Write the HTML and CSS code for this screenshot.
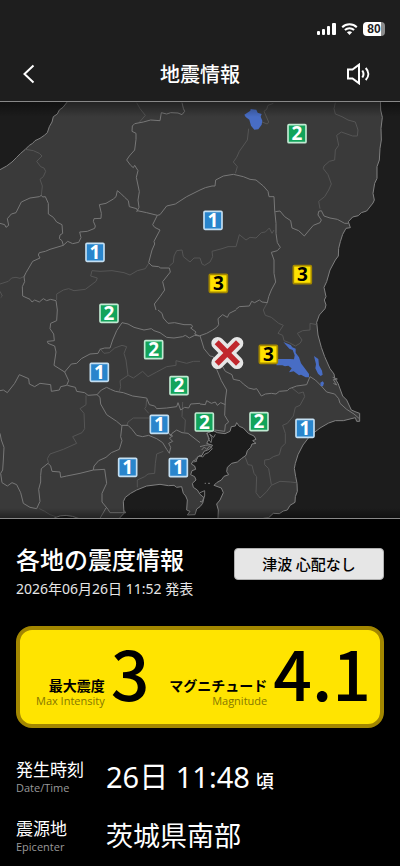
FILE: index.html
```html
<!DOCTYPE html>
<html lang="ja">
<head>
<meta charset="utf-8">
<meta name="viewport" content="width=device-width, initial-scale=1">
<title>地震情報</title>
<link rel="stylesheet" href="styles.css">
</head>
<body>
<header class="top">
  <div class="status">
    <svg class="signal" viewBox="0 0 19 12" aria-hidden="true"><rect x="0" y="8" width="3" height="4" rx="1"/><rect x="5" y="6" width="3" height="6" rx="1"/><rect x="10" y="3" width="3" height="9" rx="1"/><rect x="15" y="0" width="4" height="12" rx="1"/></svg>
    <svg class="wifi" viewBox="0 0 17 12" aria-hidden="true"><path d="M1.200 4.200C5.200 .2 11.800 .2 15.800 4.200M3.900 7C6.500 4.600 10.500 4.600 13.100 7"/><path class="dot" d="M8.500 11.900L5.900 9.300C7.300 7.900 9.700 7.900 11.100 9.300Z"/></svg>
    <span class="battery">80</span>
  </div>
  <div class="bar">
    <button class="icon-button" type="button" aria-label="戻る"><svg class="back" viewBox="0 0 12 20"><path d="M10.500 1.500L1.500 10L10.500 18.500"/></svg></button>
    <h1>地震情報</h1>
    <button class="icon-button" type="button" aria-label="音声"><svg class="sound" viewBox="0 0 24 22"><path d="M2 6.500H6.500L13 1.700V20.300L6.500 15.500H2Z"/><path d="M16.300 7.500C17.700 9.500 17.700 12.500 16.300 14.500M19.700 5C23.200 8.700 23.200 13.300 19.700 17"/></svg></button>
  </div>
</header>

<main>
<svg class="map" viewBox="0 306 1200 1248" role="img" aria-label="各地の震度">
  <defs>
    <linearGradient id="shade" x1="0" y1="0" x2="0" y2="1"><stop offset="0" stop-color="#000" stop-opacity=".4"/><stop offset="1" stop-color="#000" stop-opacity="0"/></linearGradient>
    <linearGradient id="shade-low" x1="0" y1="1" x2="0" y2="0"><stop offset="0" stop-color="#000" stop-opacity=".4"/><stop offset="1" stop-color="#000" stop-opacity="0"/></linearGradient>
    <rect id="tile" x="-27" y="-27" width="54" height="54" rx="3"/>
  </defs>
  <rect class="sea" y="300" width="1200" height="1260"/>

  <path class="land" d="M204 290L200 308L189 322L178 330L172 342L160 350L156 366L148 380L142 398L133 406L120 415L105 422L98 430L88 436L76 448L62 460L50 472L36 486L20 498L-9 514V1600H180L120 1580L165 1553Q195 1538 238 1556L260 1600H350L355 1558L372 1540L370 1505L376 1492L392 1480L410 1470L440 1458L480 1453L505 1457L522 1456L530 1462L545 1460L550 1480L557 1488L562 1500L560 1530L570 1534L562 1545L585 1544L590 1527L600 1520L608 1510L612 1493L600 1483L592 1470L580 1462L577 1450L588 1440L584 1430L572 1424L576 1412L587 1408L584 1398L574 1392L580 1382L590 1379L594 1370L606 1366L612 1354L628 1348L638 1336L620 1330L628 1316L620 1300L640 1292L652 1298L675 1301L690 1294L694 1280L706 1278L710 1268L718 1279L730 1284L745 1300L762 1308L768 1318L758 1322L768 1330L756 1332L752 1342L742 1352L738 1366L724 1376L712 1386L695 1390L682 1402L680 1415L686 1424L672 1429L664 1440L650 1448L642 1456L664 1464L670 1478L660 1500L650 1512L655 1530L652 1600H780L790 1555L806 1553L820 1540L838 1541L850 1533L862 1530L870 1516L885 1507L886 1490L892 1474L891 1450L887 1430L883 1405L886 1390L894 1364L909 1335L925 1314L942 1298L960 1284L986 1269L1006 1262L1030 1262L1066 1253L1070 1264L1079 1264L1079 1240L1068 1236L1054 1230L1040 1200L1028 1188L1014 1150L1004 1134L1002 1122L990 1106L974 1070L964 1042L954 1005L950 967L958 945L975 926L978 915L973 900L978 890L972 862L980 845L990 810L1006 780L1015 768L1016 745L1021 725L1028 703L1038 685L1051 683L1045 665L1058 651L1075 647L1084 638L1100 633L1119 609L1123 600L1119 580L1124 550L1131 535L1131 500L1138 480L1140 445L1144 420L1143 385L1147 352L1142 330L1141 290Z"/>
  <path class="coast" d="M605 1350l8-9 7 7 9-10 8 8-12 12-10 4-7 9-11-4-9 9 2 8-10 2M622 1298l4 20 7 10 3-14-7-12 12 10 5-9M624 1450h6M618 1450h-4M1000 1150l10 5-10-16 12-2-14-5M600 1478l14-6v16l-8 18-6-2"/>

  <g transform="translate(0 300)">
    <path class="minor" d="M410 8L420 26 436 46 417 68M76 148L100 152 118 160 126 168 110 184 122 200 132 204 137 214 130 230 120 238 127 258 124 286M0 552L25 544 35 534 48 532 60 535 76 528M0 574L7 588 2 593M170 600L170 582 190 570 206 566 222 572 256 568 288 544 292 534 272 528 276 512 300 514 336 512 372 518 390 525 412 512 436 506 446 490M508 498L520 488 522 468 530 452 546 450 550 470 570 486 582 474 600 474"/>
    <path class="border" d="M546 8L550 25 554 34 546 44 534 39 512 38 500 42 484 38 480 62 452 60 430 66 404 71 397 78 396 94 408 100 408 118 404 150 388 168 380 180 392 196 400 203 404 196 414 212 409 232 418 275 414 300 417 322 410 336"/>
    <path class="border" d="M0 370L14 374 18 382 26 376 22 356 34 342 48 338 64 306 90 294 118 290 124 286 128 291 136 290 145 310 145 342 160 352 170 366 186 374 188 400 180 405 178 416 186 422 190 436 203 424 218 431 236 427 243 413 239 396 262 394 284 385 286 378 280 364 282 356 303 355 304 340 298 314 318 310 340 297 348 290 352 272 362 280 374 292 385 302 388 320 410 326 412 332 440 338 472 346"/>
    <path class="border" d="M190 436L150 448 136 454 118 458 115 465 120 474 98 484 78 518 72 530 74 545 67 560 68 588 90 598 96 606 104 600 118 606 130 596 140 602 152 598 168 602 172 630M472 346L458 374 464 382 480 390 462 424 464 432 456 450 446 488 456 498 476 500 482 504 508 504 511 516 488 545 494 570 480 590 463 612 468 630M472 346L480 344 500 318 526 312 560 290 600 270"/>
  </g>
  <g transform="translate(600 300)">
    <path class="minor" d="M220 10L204 16 200 28 192 34 206 66 202 72 186 66M146 86L142 120 118 154 110 172 100 186 112 200 106 220M406 8L402 26 406 42 426 50 444 60 466 66 474 90 472 108 458 108 424 96 410 106 416 136 406 150 404 180 388 184 372 198 370 206 384 224 394 252 386 270 374 290 356 304 360 326M0 474L6 492 14 496 30 486 38 470 36 454 66 446 84 440 108 440 118 404 138 420 150 412 168 414 184 398 196 396 208 384 216 400 222 390M190 630L202 608"/>
    <path class="border" d="M0 270L16 263 36 258 45 258 47 240 70 228 100 223 130 230 150 238 168 240 190 258 204 274 207 290 222 290 224 330 228 370 228 400 232 428 241 442 232 452 214 457 222 480 222 520 227 546 214 570 206 590 202 608 186 606 178 600 164 608 155 604 148 618 118 620 108 628M226 335L240 333 254 350 272 362 276 384 296 392 313 408 328 390 340 376 360 368 364 360 354 345 356 334 364 332 372 348 390 354 412 358 434 370 445 370"/>
  </g>
  <g transform="translate(0 930)">
    <path class="minor" d="M300 116L312 130 328 128 344 114 366 106 380 110 372 130 378 150 384 196 360 212 362 230 358 244M385 196L400 204 428 184 444 200 470 186 500 170 528 166 528 152 560 160 580 154 600 154M258 256L258 284 240 296 252 310 254 356 246 368 218 380 230 400 190 418 150 432 142 446 146 460M380 348L384 336 400 324 448 324M440 268L438 290 434 296 446 310M548 276L546 320 556 330 554 366M490 424L470 432 466 460 464 490 444 492 434 500 412 510 412 532M118 596L134 604 150 614 168 620"/>
    <path class="border" d="M172 0L170 32 152 40 150 56 161 72 163 92 142 94 144 100 164 108 168 126 162 166 194 186 214 162 230 160 244 146 270 132 294 130 300 118 314 114 330 114 338 90 350 62 366 38 384 42 402 52 432 60 454 56 462 62 480 68 500 82 522 84 548 80 556 76 568 84 584 76 600 78M474 0L486 10 490 24 504 40 524 38 552 44 574 44 578 50 572 54 588 66 584 72 598 78"/>
    <path class="border" d="M194 186L206 212 200 226 182 230 178 240 154 244 152 224 120 220 104 230 88 222 86 206 58 194 44 220 22 248 10 240 0 242M202 226L226 232 230 244 254 248 264 256 291 254 304 240 320 232 332 238 346 244 370 248 398 258 440 264 448 284 464 288 470 296 500 294 530 290 534 278 542 300 554 292 566 294 572 282 600 280"/>
    <path class="border" d="M291 254L300 262 302 282 320 314 350 334 364 346 384 346 396 358 410 376 428 380 446 376 470 386 488 398 500 418 508 430 512 412 506 400 518 394 508 384 518 378 506 370M504 366L512 378 516 370 530 360 546 368 564 370 582 384 600 398"/>
    <path class="border" d="M366 346L362 380 366 392 358 418 334 428 318 442 296 452 282 468 280 480 240 490 200 498 182 502 180 486 156 484 152 468 144 460 124 476 122 496 122 516 116 538 120 574 110 596 90 592 70 580 62 548 50 524 36 518 22 528 6 518 2 490 8 480 10 450 12 412 4 390 0 370M280 480L314 478 320 520 306 550 306 576 324 598 330 608 360 608 378 608 370 600M318 594L300 625"/>
  </g>
  <g transform="translate(600 930)">
    <path class="minor" d="M190 0L196 16 214 22 236 40 250 46 234 70 248 76 252 92 268 98 286 108 300 100 306 90 292 70 308 62 330 60 330 40 350 44M276 234L296 250 310 246 314 260 300 286 286 292 280 318 262 340 248 346 256 370 256 400 244 412 238 434 220 440 208 448 194 450 194 464 206 476 214 524M136 442L144 464 156 466 162 490 170 500 168 548 180 564 200 545 214 526 240 514 272 516 288 518"/>
    <path class="border" d="M0 77L20 70 38 60 50 52 56 44 54 26 68 14 82 22 88 10 108 0M68 170L76 184 96 194 100 208 120 212 130 222 146 234 162 238 170 236 184 258 196 252 214 250 228 252 238 244 262 242 268 236 290 228 320 224 330 200 346 210 364 228 380 246 404 252 416 266 420 280 440 298 462 312 478 326"/>
    <path class="border" d="M0 77L12 116 30 138 40 140 46 168 64 212 80 240 76 270 74 316 86 336 76 344 74 364 44 360M0 282L16 284 20 272 34 280 46 276 52 286 62 278 76 284M0 410L16 406 30 404"/>
  </g>

  <path class="lake" d="M733 344l18-12 1-5 17 2 4 9 12 4-3 8 5 12-2 12-10 14-12 1-10-12-5-18-11-8zM832 1077h26l12 0 12 1 2-12-6-16-10-4-18-20 22 9 5 7 10 4 0 12 10 14 6 18 24 32 0 10-10 0-14-8-6 2-16-12-14 3 8-12-10-8-10 2-8-3h-18zM942 1068l13 9 2 19 9 16 2 12-6 4-8-7-8-16 2-12zM961 1148l7-4 4 5-3 10-7-1z"/>

  <rect y="306" width="1200" height="45" fill="url(#shade)"/>
  <rect y="1524" width="1200" height="30" fill="url(#shade-low)"/>

  <g class="pin one" transform="translate(639 661)"><use href="#tile"/><text y="20">1</text></g>
  <g class="pin one" transform="translate(285 757)"><use href="#tile"/><text y="20">1</text></g>
  <g class="pin one" transform="translate(298 1117)"><use href="#tile"/><text y="20">1</text></g>
  <g class="pin one" transform="translate(478 1273)"><use href="#tile"/><text y="20">1</text></g>
  <g class="pin one" transform="translate(383 1402)"><use href="#tile"/><text y="20">1</text></g>
  <g class="pin one" transform="translate(535 1403)"><use href="#tile"/><text y="20">1</text></g>
  <g class="pin one" transform="translate(915 1285)"><use href="#tile"/><text y="20">1</text></g>
  <g class="pin two" transform="translate(891 401)"><use href="#tile"/><text y="20">2</text></g>
  <g class="pin two" transform="translate(327 940)"><use href="#tile"/><text y="20">2</text></g>
  <g class="pin two" transform="translate(461 1049)"><use href="#tile"/><text y="20">2</text></g>
  <g class="pin two" transform="translate(537 1157)"><use href="#tile"/><text y="20">2</text></g>
  <g class="pin two" transform="translate(613 1266)"><use href="#tile"/><text y="20">2</text></g>
  <g class="pin two" transform="translate(777 1265)"><use href="#tile"/><text y="20">2</text></g>
  <g class="pin three" transform="translate(655 850)"><use href="#tile"/><text y="20">3</text></g>
  <g class="pin three" transform="translate(907 824)"><use href="#tile"/><text y="20">3</text></g>
  <g class="pin three" transform="translate(805 1063)"><use href="#tile"/><text y="20">3</text></g>
  <g transform="translate(682 1059)"><path class="cross-edge" d="M-29-29L29 29M29-29L-29 29"/><path class="cross" d="M-32-32L32 32M32-32L-32 32"/></g>
</svg>

<section class="report">
  <div class="report-head">
    <div>
      <h2>各地の震度情報</h2>
      <time class="issued" datetime="2026-06-26T11:52">2026年06月26日 11:52 発表</time>
    </div>
    <p class="tsunami">津波 心配なし</p>
  </div>

  <div class="summary">
    <div class="measure">
      <div class="caption"><b>最大震度</b><small>Max Intensity</small></div>
      <strong>3</strong>
    </div>
    <div class="measure">
      <div class="caption"><b>マグニチュード</b><small>Magnitude</small></div>
      <strong>4.1</strong>
    </div>
  </div>

  <dl class="details">
    <dt>発生時刻<small>Date/Time</small></dt>
    <dd class="when">26日 11:48<span class="about">頃</span></dd>
    <dt>震源地<small>Epicenter</small></dt>
    <dd>茨城県南部</dd>
  </dl>
</section>
</main>
</body>
</html>
```
FILE: styles.css
```css
* { box-sizing: border-box; }

body {
  margin: 0;
  background: #000;
  color: #fff;
  font-family: "Noto Sans", "Noto Sans CJK JP", sans-serif;
}

h1, h2, p, dl, dd { margin: 0; }
svg { display: block; }

.top {
  background: #1e1e1e;
  border-bottom: 1px solid #888;
  padding-top: 22px;
}

.status {
  display: flex;
  justify-content: flex-end;
  align-items: center;
  gap: 5px;
  height: 14px;
  padding-right: 15px;
}
.signal { width: 19px; height: 12px; fill: #fff; }
.wifi { width: 17px; height: 12px; fill: none; stroke: #fff; stroke-width: 2; }
.wifi .dot { fill: #fff; stroke: none; }
.battery {
  width: 22px;
  height: 14px;
  border-radius: 4px;
  background: linear-gradient(to right, #fff 80%, #8c8c8c 80%);
  color: #1e1e1e;
  font: bold 12px/14px "Liberation Sans", sans-serif;
  text-align: center;
}

.bar {
  display: flex;
  justify-content: space-between;
  align-items: center;
  height: 65px;
  padding: 10px 30px 0 17px;
}
.bar h1 { font-size: 20px; line-height: 30px; font-weight: 500; font-family: "Noto Sans CJK JP", sans-serif; padding-left: 13px; }
.icon-button {
  display: flex;
  align-items: center;
  width: 24px;
  height: 24px;
  padding: 0;
  border: 0;
  background: none;
  fill: none;
  stroke: #fff;
  stroke-width: 2;
}
.back { width: 12px; height: 20px; margin: auto; }
.sound { width: 24px; height: 22px; }

.map { width: 100%; height: auto; border-bottom: 1px solid #888; }
.sea { fill: #1c1c1c; }
.land { fill: #3a3a3a; stroke: #808080; stroke-width: 3; stroke-linejoin: round; }
.coast, .border, .minor { fill: none; stroke: #777; stroke-width: 3; stroke-linejoin: round; }
.minor { stroke: #555; }
.lake { fill: #486dc5; }
.pin text {
  font: bold 57px "Noto Sans", sans-serif;
  text-anchor: middle;
}
.pin { stroke-width: 5; }
.pin text { stroke: none; fill: #fff; }
.one { fill: #2985cc; stroke: #c4dff2; }
.two { fill: #12a45b; stroke: #c0ead2; }
.three { fill: #ffe200; stroke: #a38700; }
.pin.three text { fill: #000; }
.cross-edge { stroke: #e6e6e6; stroke-width: 38; stroke-linecap: round; }
.cross { stroke: #c1272d; stroke-width: 17; }

.report { padding: 20px 16px; }
.report-head {
  display: flex;
  justify-content: space-between;
  align-items: center;
}
.report-head h2 { font: 500 24px/40px "Noto Sans CJK JP", sans-serif; }
.issued { display: block; font-size: 14px; line-height: 20px; color: #e6e6e6; }
.tsunami {
  width: 150px;
  margin-bottom: 10px;
  border: 1px solid #b0b0b0;
  border-radius: 4px;
  background: #e6e6e6;
  color: #000;
  font: 500 15px/30px "Noto Sans CJK JP", sans-serif;
  text-align: center;
}

.summary {
  display: flex;
  justify-content: space-between;
  align-items: center;
  height: 102px;
  margin-top: 27px;
  padding: 0 9px 10px 16px;
  border: 4px solid #a38700;
  border-radius: 16px;
  background: #ffe400;
  color: #000;
}
.measure { display: flex; align-items: flex-end; gap: 6px; }
.caption { text-align: right; padding-bottom: 4px; }
.caption b { display: block; font: 700 14px/18px "Noto Sans CJK JP", sans-serif; }
small { display: block; font: 400 11px/14px "Open Sans", sans-serif; }
.caption small { color: #857700; }
.measure strong { font: 500 68px/80px "Noto Sans CJK JP", sans-serif; }

.details {
  display: grid;
  grid-template-columns: 90px 1fr;
  row-gap: 19px;
  margin-top: 29px;
  align-items: center;
}
.details dt { font-size: 17px; line-height: 22px; }
.details small { color: #999; }
.details dd { font-size: 27px; line-height: 40px; }
.details .when { font-size: 29px; }
.about { margin-left: 6px; font-size: 18px; line-height: 20px; font-weight: 500; }
```
